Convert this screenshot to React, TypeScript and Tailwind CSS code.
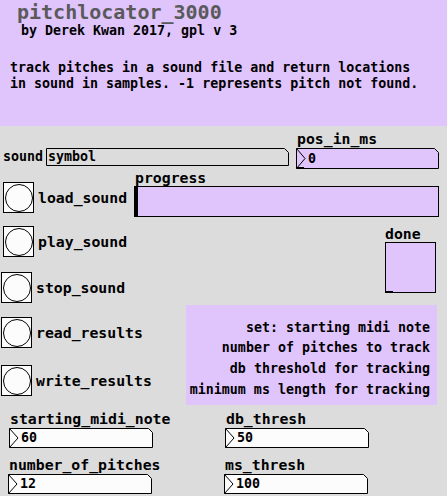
import React from "react";

const FONT = { fontFamily: '"DejaVu Sans Mono", "Liberation Mono", monospace' };
const PURPLE = "#e0c4fc";

function T({ x, b, children, big = false }: { x: number; b: number; children: React.ReactNode; big?: boolean }) {
  return (
    <div
      className={
        "absolute whitespace-pre leading-[16px] font-bold text-black " + (big ? "text-[14.8px]" : "text-[13.3px]")
      }
      style={{ left: x, top: b - 13 }}
    >
      {children}
    </div>
  );
}

function NumBox({ w, h, fill, value, tri = true }: { w: number; h: number; fill: string; value: string; tri?: boolean }) {
  return (
    <div className="relative shrink-0" style={{ width: w, height: h }}>
      <svg width={w} height={h} className="absolute left-0 top-0">
        <path
          d={`M0.5,0.5 H${w - 4.5} L${w - 0.5},4.5 V${h - 0.5} H0.5 Z`}
          fill={fill}
          stroke="#000"
          strokeWidth="1"
        />
        {tri && <path d={`M0.5,0.5 L9,${h / 2} L0.5,${h - 0.5}`} fill="none" stroke="#000" strokeWidth="1" />}
      </svg>
      <div
        className="relative flex h-full items-center whitespace-pre text-[13.3px] leading-[16px] font-bold text-black"
        style={{ paddingLeft: tri ? 12 : 2 }}
      >
        {value}
      </div>
    </div>
  );
}

function Field({ x, y, label, value, fill = "#fcfcfc", w = 144, h = 20 }: { x: number; y: number; label: string; value: string; fill?: string; w?: number; h?: number }) {
  return (
    <div className="absolute flex flex-col items-start gap-[1px]" style={{ left: x, top: y }}>
      <div className="ml-[1px] whitespace-pre text-[14.8px] leading-[16px] font-bold text-black">{label}</div>
      <NumBox w={w} h={h} fill={fill} value={value} />
    </div>
  );
}

function BangRow({ x, y, label }: { x: number; y: number; label: string }) {
  return (
    <div className="absolute flex items-center gap-[4px]" style={{ left: x, top: y }}>
      <div className="flex h-[31px] w-[31px] items-center justify-center border border-black bg-[#fcfcfc]">
        <div className="h-[28px] w-[28px] rounded-full border border-black bg-[#fcfcfc]" />
      </div>
      <div className="whitespace-pre text-[14.8px] leading-[16px] font-bold text-black">{label}</div>
    </div>
  );
}

export default function App() {
  return (
    <div className="relative h-[496px] w-[447px] overflow-hidden bg-[#dcdcdc]" style={FONT}>
      {/* header panel */}
      <div className="absolute left-0 top-0 h-[126px] w-[447px] bg-[#e0c4fc] pl-[10px] pt-[1px]">
        <div className="ml-[7px] whitespace-pre text-[20px] leading-[22px] font-bold text-[#5a5a5a]">pitchlocator_3000</div>
        <div className="ml-[11px] whitespace-pre text-[13.3px] leading-[16px] font-bold text-black">by Derek Kwan 2017, gpl v 3</div>
        <div className="mt-[21px] whitespace-pre text-[13.3px] leading-[16px] font-bold text-black">
          {"track pitches in a sound file and return locations\nin sound in samples. -1 represents pitch not found."}
        </div>
      </div>

      {/* sound symbol */}
      <div className="absolute left-[3px] top-[148px] flex items-center gap-[3px]">
        <div className="whitespace-pre text-[13.3px] leading-[16px] font-bold text-black">sound</div>
        <NumBox w={243} h={18} fill="#dcdcdc" value="symbol" tri={false} />
      </div>

      {/* pos_in_ms */}
      <Field x={296} y={131} label="pos_in_ms" value="0" fill={PURPLE} w={143} h={21} />
      <div className="absolute left-[297px] top-[167px] h-[2px] w-[7px] bg-black" />

      {/* progress */}
      <div className="absolute left-[134px] top-[170px] flex flex-col">
        <div className="ml-[1px] whitespace-pre text-[14.8px] leading-[16px] font-bold text-black">progress</div>
        <div className="relative h-[31px] w-[305px] border border-black bg-[#e0c4fc]">
          <div className="absolute left-0 top-0 h-full w-[3px] bg-black" />
        </div>
      </div>

      {/* bangs */}
      <BangRow x={3} y={182} label="load_sound" />
      <BangRow x={3} y={226} label="play_sound" />
      <BangRow x={1} y={272} label="stop_sound" />
      <BangRow x={1} y={317} label="read_results" />
      <BangRow x={1} y={365} label="write_results" />

      {/* done toggle */}
      <div className="absolute left-[385px] top-[226px] flex flex-col">
        <div className="whitespace-pre text-[14.8px] leading-[16px] font-bold text-black">done</div>
        <div className="relative h-[51px] w-[51px] border border-black bg-[#e0c4fc]">
          <div className="absolute bottom-0 left-0 h-[1px] w-[7px] bg-black" />
        </div>
      </div>

      {/* comment box */}
      <div className="absolute left-[186px] top-[305px] flex h-[100px] w-[251px] flex-col items-end bg-[#e0c4fc] pr-[7px] pt-[13px] text-[13.3px] font-bold text-black">
        <div className="h-[20px] leading-[20px]">set: starting midi note</div>
        <div className="h-[21px] leading-[20px]">number of pitches to track</div>
        <div className="h-[21px] leading-[20px]">db threshold for tracking</div>
        <div className="h-[21px] leading-[20px]">minimum ms length for tracking</div>
      </div>

      {/* bottom number boxes */}
      <Field x={9} y={411} label="starting_midi_note" value="60" />
      <Field x={225} y={411} label="db_thresh" value="50" />
      <Field x={8} y={457} label="number_of_pitches" value="12" />
      <Field x={224} y={457} label="ms_thresh" value="100" />
    </div>
  );
}
